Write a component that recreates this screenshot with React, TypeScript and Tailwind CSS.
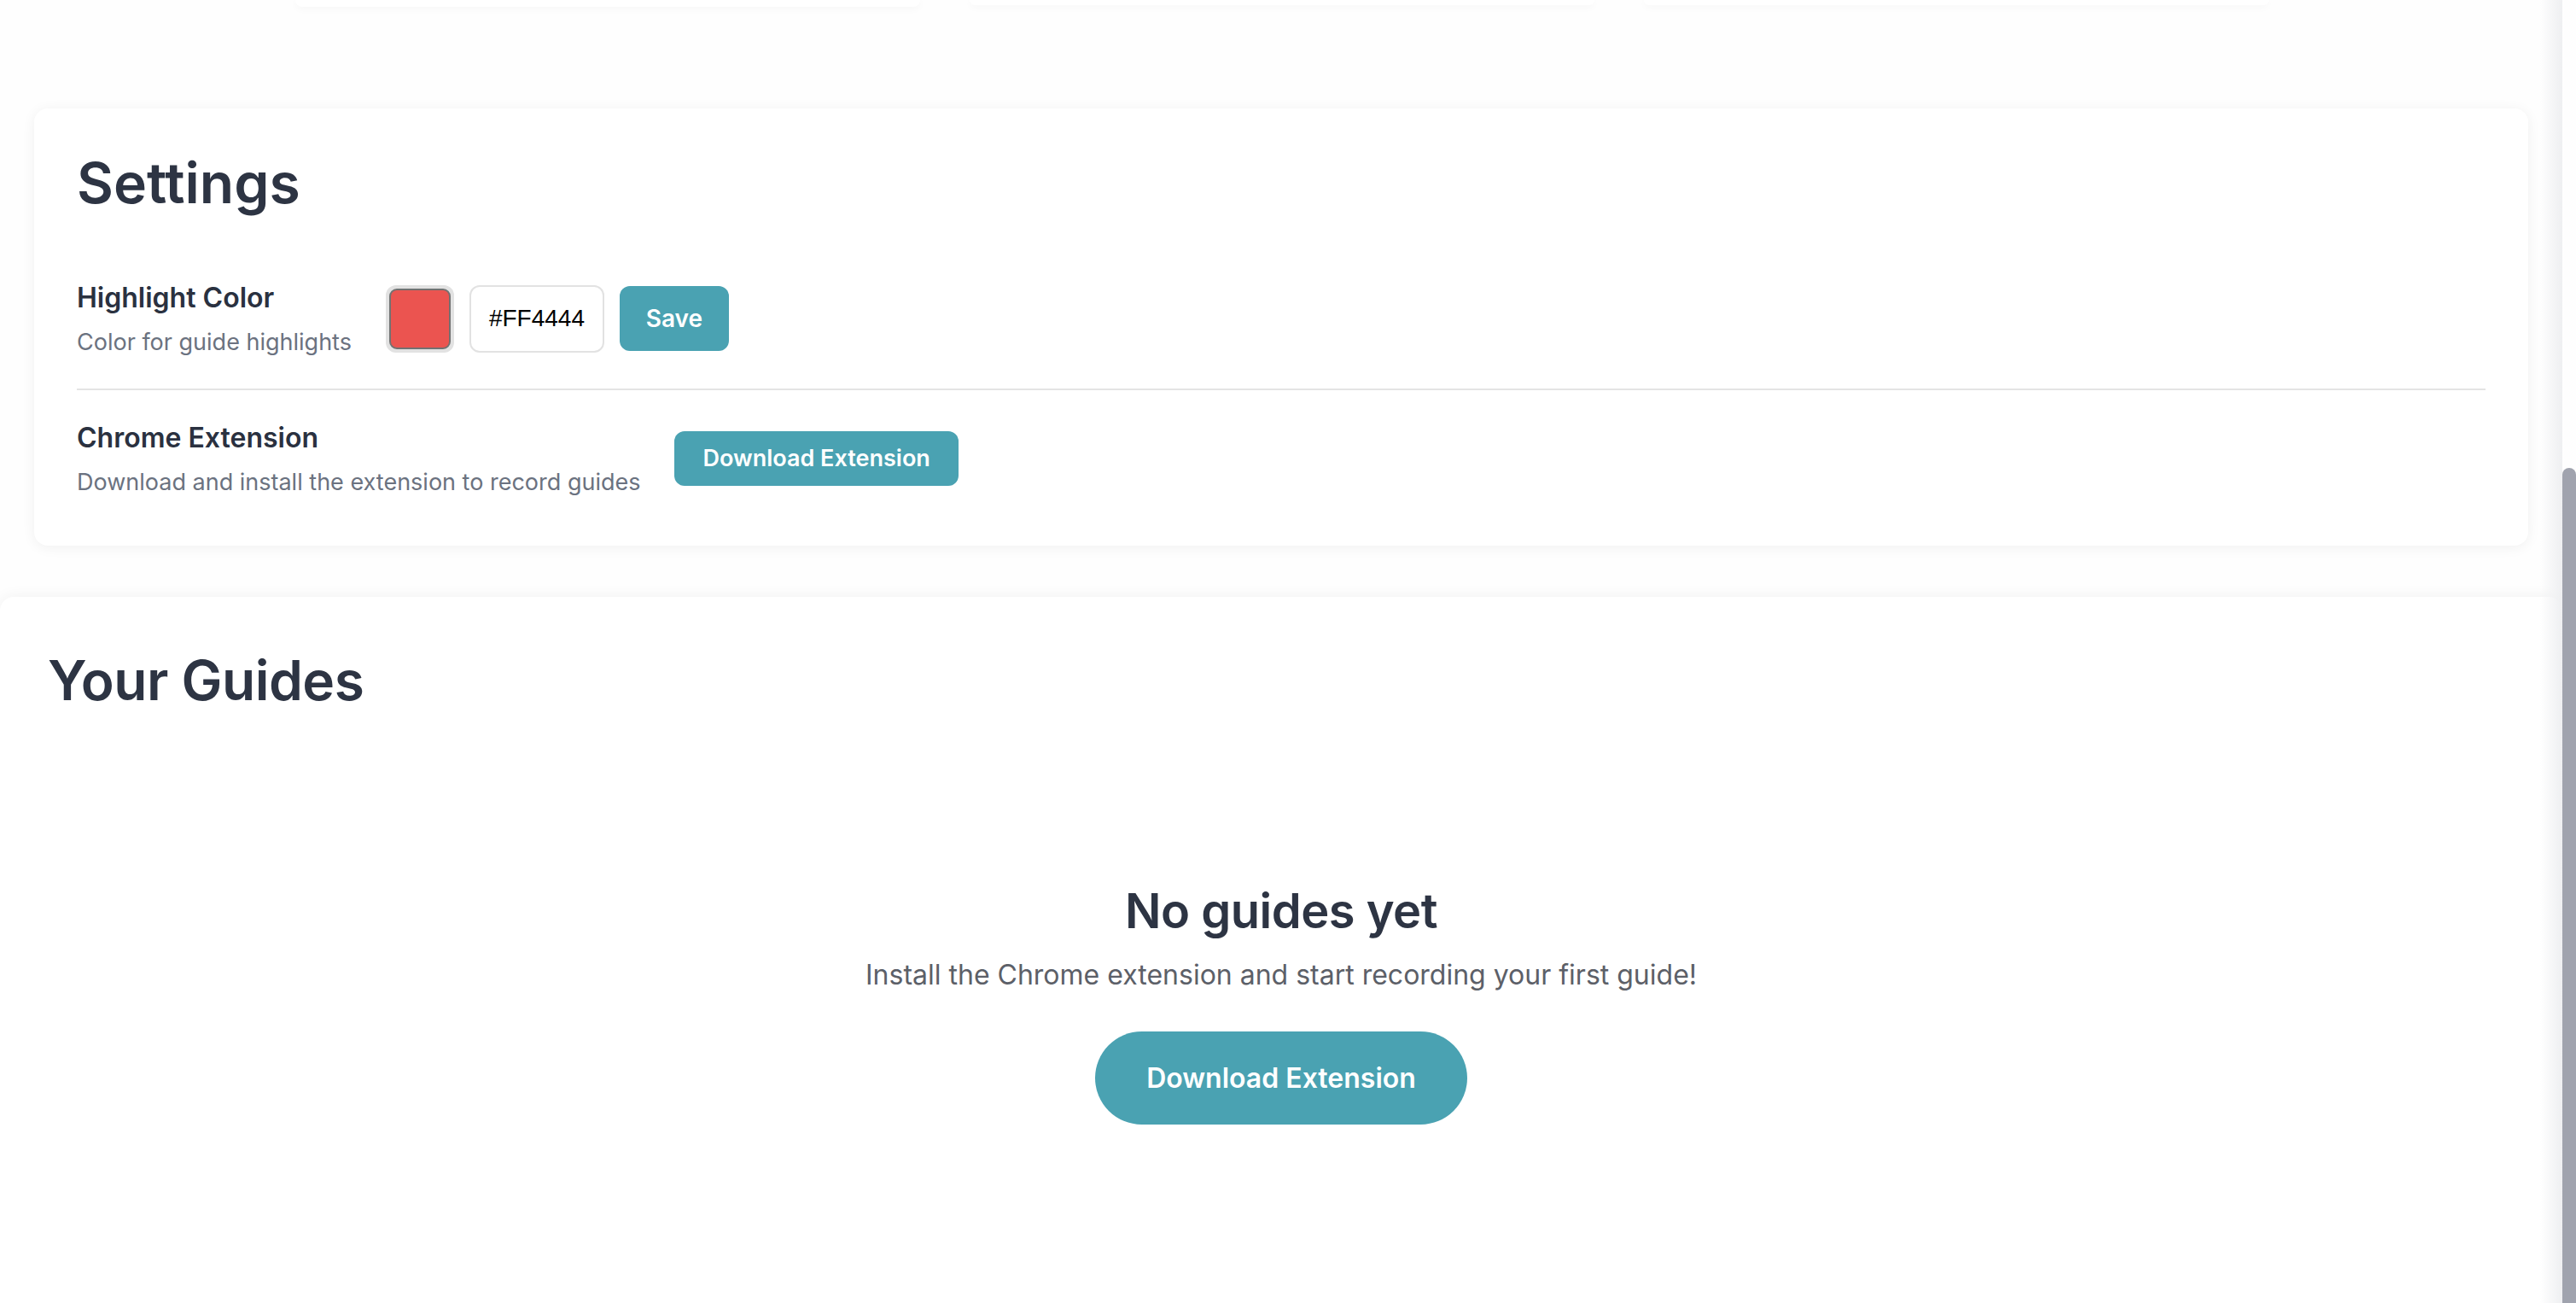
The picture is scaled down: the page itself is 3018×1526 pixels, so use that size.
import React from "react";

function SettingRow({
  title,
  desc,
  children,
  className,
}: {
  title: string;
  desc: string;
  children: React.ReactNode;
  className: string;
}) {
  return (
    <div className={"flex items-center gap-[40px] " + className}>
      <div className="flex flex-col">
        <div className="text-[32px] leading-[48px] font-semibold text-[#2a3140]">{title}</div>
        <div className="mt-[8px] text-[27px] leading-[40px] text-[#6b7280]">{desc}</div>
      </div>
      {children}
    </div>
  );
}

export default function App() {
  return (
    <div className="relative w-[3018px] h-[1526px] overflow-hidden bg-[#fefefe] font-['Inter',sans-serif]">
      <div className="w-[3002px] h-full flex flex-col">
        {/* bottoms of cards scrolled above */}
        <div className="flex h-[10px] gap-[58px] pl-[346px]">
          <div className="w-[732px] h-[8px] rounded-b-[16px] bg-white shadow-[0_2px_10px_rgba(0,0,0,0.04)]" />
          <div className="w-[732px] h-[6px] rounded-b-[16px] bg-white shadow-[0_2px_10px_rgba(0,0,0,0.04)]" />
          <div className="w-[732px] h-[6px] rounded-b-[16px] bg-white shadow-[0_2px_10px_rgba(0,0,0,0.04)]" />
        </div>

        {/* Settings card */}
        <div className="ml-[40px] mt-[117px] w-[2922px] rounded-[16px] bg-white shadow-[0_2px_16px_rgba(0,0,0,0.06)] px-[50px] pt-[48px] pb-[54px]">
          <h2 className="text-[66px] leading-[78px] font-semibold text-[#2d3443]">Settings</h2>

          <SettingRow
            title="Highlight Color"
            desc="Color for guide highlights"
            className="mt-[72px] pb-[34px] border-b-2 border-[#e4e4e4]"
          >
            <div className="flex items-center gap-[18px]">
              <div className="w-[80px] h-[79px] rounded-[12px] bg-[#e2e2e2] p-[4px]">
                <div className="w-full h-full rounded-[9px] border-2 border-[#727272] bg-[#eb5450]" />
              </div>
              <div className="w-[158px] h-[79px] rounded-[12px] border-2 border-[#e2e2e2] bg-white flex items-center justify-center font-['Liberation_Sans',Arial,sans-serif] text-[28px] text-black">
                #FF4444
              </div>
              <button className="w-[128px] h-[76px] rounded-[12px] bg-[#4aa2b2] text-white text-[28px] font-semibold">
                Save
              </button>
            </div>
          </SettingRow>

          <SettingRow
            title="Chrome Extension"
            desc="Download and install the extension to record guides"
            className="pt-[32px]"
          >
            <button className="h-[64px] px-[33px] rounded-[12px] bg-[#4aa2b2] text-white text-[27px] font-semibold">
              Download Extension
            </button>
          </SettingRow>
        </div>

        {/* Your Guides card */}
        <div className="mt-[60px] flex-1 rounded-t-[16px] bg-white shadow-[0_0_18px_rgba(0,0,0,0.06)] px-[56px] pt-[59px]">
          <h2 className="text-[64px] leading-[77px] font-semibold text-[#2d3443] tracking-[-0.5px]">Your Guides</h2>
          <div className="mt-[199px] flex flex-col items-center">
            <div className="text-[56px] leading-[67px] font-semibold text-[#2d3443] tracking-[-0.5px]">No guides yet</div>
            <p className="mt-[17px] text-[32px] leading-[48px] text-[#5c6068]">
              Install the Chrome extension and start recording your first guide!
            </p>
            <button className="mt-[42px] h-[109px] px-[60px] rounded-full bg-[#4aa2b2] text-white text-[32px] font-semibold">
              Download Extension
            </button>
          </div>
        </div>
      </div>

      {/* scrollbar overlay */}
      <div className="absolute top-0 right-[16px] w-[26px] h-full bg-gradient-to-r from-transparent to-[#eeeff1]" />
      <div className="absolute top-[548px] right-0 w-[16px] bottom-0 rounded-t-full bg-[#a0a3ae]" />
    </div>
  );
}
